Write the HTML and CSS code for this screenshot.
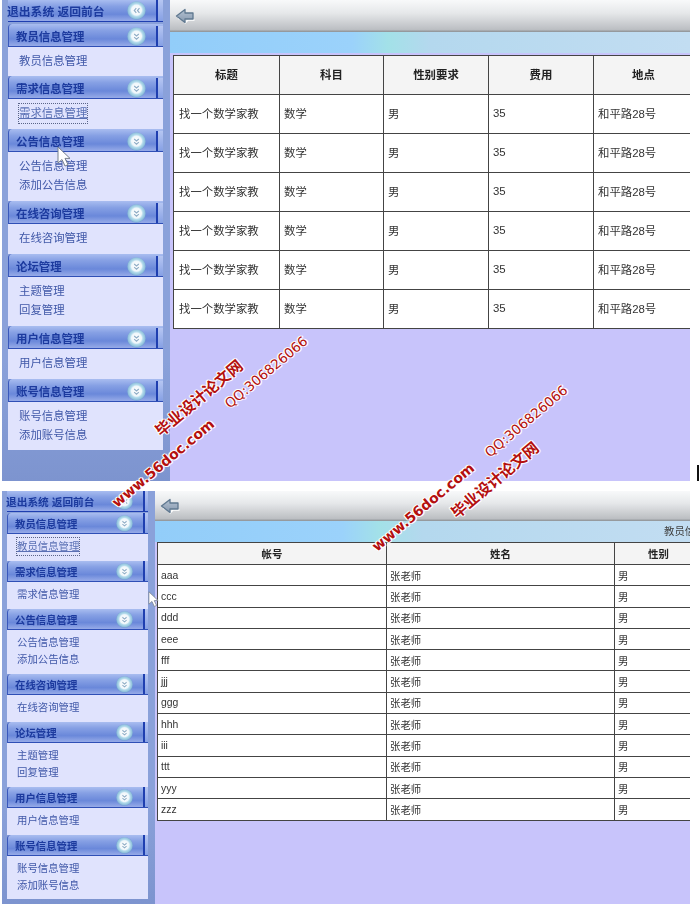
FILE: index.html
```html
<!DOCTYPE html>
<html lang="zh-CN">
<head>
<meta charset="utf-8">
<title>后台管理</title>
<link rel="stylesheet" href="styles.css">
</head>
<body>
<svg class="defs" width="0" height="0" aria-hidden="true">
  <defs>
    <radialGradient id="orb" cx="50%" cy="48%" r="52%">
      <stop offset="0" stop-color="#ffffff"/>
      <stop offset=".52" stop-color="#f0f7fb"/>
      <stop offset=".66" stop-color="#b4dcec"/>
      <stop offset=".88" stop-color="#8fc0dc"/>
      <stop offset="1" stop-color="#6e9ad0"/>
    </radialGradient>
    <linearGradient id="arrowFill" x1="0" y1="0" x2="0" y2="1">
      <stop offset="0" stop-color="#b4c2d2"/>
      <stop offset="1" stop-color="#8698ae"/>
    </linearGradient>
    <symbol id="i-down" viewBox="0 0 18 18">
      <circle cx="9" cy="9" r="8.800" fill="url(#orb)"/>
      <path d="M6.800 6.600 9 8.500l2.200-1.900M6.800 9.600 9 11.500l2.200-1.900" fill="none" stroke="#8fadc6" stroke-width="1.100"/>
    </symbol>
    <symbol id="i-left" viewBox="0 0 18 18">
      <circle cx="9" cy="9" r="8.800" fill="url(#orb)"/>
      <path d="M8.800 6.800 6.900 9l1.900 2.200M11.800 6.800 9.900 9l1.900 2.200" fill="none" stroke="#8fadc6" stroke-width="1.100"/>
    </symbol>
    <symbol id="i-back" viewBox="0 0 20 16">
      <path d="M3 10.500h7.500v4L13 12h6.500M11 15.500" fill="none" stroke="#fff" stroke-width="1.500"/>
      <path d="M1.500 8 10 1.500V5h8v6h-8v3.500Z" fill="url(#arrowFill)" stroke="#5f7890" stroke-width="1.300" stroke-linejoin="round"/>
    </symbol>
    <symbol id="i-cursor" viewBox="0 0 14 22">
      <path d="M1 1v16l4-3.500 3 6.500 3-1.300-3-6.300h5Z" fill="#fff" stroke="#77808c" stroke-width="1"/>
    </symbol>
  </defs>
</svg>

<div class="page">
  <section class="shot shot--a">
    <nav class="sidebar">
      <div class="topbar-nav"><span>退出系统 返回前台</span><svg class="orb"><use href="#i-left"/></svg><i class="tab"></i></div>
      <div class="group"><h3 class="group-head"><span>教员信息管理</span><svg class="orb"><use href="#i-down"/></svg><i class="tab"></i></h3><div class="group-body group-body--first"><a class="link" href="#">教员信息管理</a></div></div>
      <div class="group"><h3 class="group-head"><span>需求信息管理</span><svg class="orb"><use href="#i-down"/></svg><i class="tab"></i></h3><div class="group-body"><a class="link link--focus" href="#">需求信息管理</a></div></div>
      <div class="group"><h3 class="group-head"><span>公告信息管理</span><svg class="orb"><use href="#i-down"/></svg><i class="tab"></i></h3><div class="group-body"><a class="link" href="#">公告信息管理</a><a class="link" href="#">添加公告信息</a></div></div>
      <div class="group"><h3 class="group-head"><span>在线咨询管理</span><svg class="orb"><use href="#i-down"/></svg><i class="tab"></i></h3><div class="group-body"><a class="link" href="#">在线咨询管理</a></div></div>
      <div class="group"><h3 class="group-head"><span>论坛管理</span><svg class="orb"><use href="#i-down"/></svg><i class="tab"></i></h3><div class="group-body"><a class="link" href="#">主题管理</a><a class="link" href="#">回复管理</a></div></div>
      <div class="group"><h3 class="group-head"><span>用户信息管理</span><svg class="orb"><use href="#i-down"/></svg><i class="tab"></i></h3><div class="group-body"><a class="link" href="#">用户信息管理</a></div></div>
      <div class="group"><h3 class="group-head"><span>账号信息管理</span><svg class="orb"><use href="#i-down"/></svg><i class="tab"></i></h3><div class="group-body"><a class="link" href="#">账号信息管理</a><a class="link" href="#">添加账号信息</a></div></div>
    </nav>
    <main class="main">
      <div class="toolbar"><svg class="back"><use href="#i-back"/></svg></div>
      <div class="strip"></div>
      <table class="grid">
        <thead><tr><th class="c1">标题</th><th class="c2">科目</th><th class="c3">性别要求</th><th class="c4">费用</th><th class="c5">地点</th></tr></thead>
        <tbody>
          <tr><td>找一个数学家教</td><td>数学</td><td>男</td><td>35</td><td>和平路28号</td></tr>
          <tr><td>找一个数学家教</td><td>数学</td><td>男</td><td>35</td><td>和平路28号</td></tr>
          <tr><td>找一个数学家教</td><td>数学</td><td>男</td><td>35</td><td>和平路28号</td></tr>
          <tr><td>找一个数学家教</td><td>数学</td><td>男</td><td>35</td><td>和平路28号</td></tr>
          <tr><td>找一个数学家教</td><td>数学</td><td>男</td><td>35</td><td>和平路28号</td></tr>
          <tr><td>找一个数学家教</td><td>数学</td><td>男</td><td>35</td><td>和平路28号</td></tr>
        </tbody>
      </table>
    </main>
  </section>

  <section class="shot shot--b">
    <nav class="sidebar">
      <div class="topbar-nav"><span>退出系统 返回前台</span><svg class="orb"><use href="#i-left"/></svg><i class="tab"></i></div>
      <div class="group"><h3 class="group-head"><span>教员信息管理</span><svg class="orb"><use href="#i-down"/></svg><i class="tab"></i></h3><div class="group-body"><a class="link link--focus" href="#">教员信息管理</a></div></div>
      <div class="group"><h3 class="group-head"><span>需求信息管理</span><svg class="orb"><use href="#i-down"/></svg><i class="tab"></i></h3><div class="group-body"><a class="link" href="#">需求信息管理</a></div></div>
      <div class="group"><h3 class="group-head"><span>公告信息管理</span><svg class="orb"><use href="#i-down"/></svg><i class="tab"></i></h3><div class="group-body"><a class="link" href="#">公告信息管理</a><a class="link" href="#">添加公告信息</a></div></div>
      <div class="group"><h3 class="group-head"><span>在线咨询管理</span><svg class="orb"><use href="#i-down"/></svg><i class="tab"></i></h3><div class="group-body"><a class="link" href="#">在线咨询管理</a></div></div>
      <div class="group"><h3 class="group-head"><span>论坛管理</span><svg class="orb"><use href="#i-down"/></svg><i class="tab"></i></h3><div class="group-body"><a class="link" href="#">主题管理</a><a class="link" href="#">回复管理</a></div></div>
      <div class="group"><h3 class="group-head"><span>用户信息管理</span><svg class="orb"><use href="#i-down"/></svg><i class="tab"></i></h3><div class="group-body"><a class="link" href="#">用户信息管理</a></div></div>
      <div class="group"><h3 class="group-head"><span>账号信息管理</span><svg class="orb"><use href="#i-down"/></svg><i class="tab"></i></h3><div class="group-body"><a class="link" href="#">账号信息管理</a><a class="link" href="#">添加账号信息</a></div></div>
    </nav>
    <main class="main">
      <div class="toolbar"><svg class="back"><use href="#i-back"/></svg></div>
      <div class="strip"><span class="strip-label">教员信息管理</span></div>
      <table class="grid">
        <thead><tr><th class="c1">帐号</th><th class="c2">姓名</th><th class="c3">性别</th></tr></thead>
        <tbody>
          <tr><td>aaa</td><td>张老师</td><td>男</td></tr>
          <tr><td>ccc</td><td>张老师</td><td>男</td></tr>
          <tr><td>ddd</td><td>张老师</td><td>男</td></tr>
          <tr><td>eee</td><td>张老师</td><td>男</td></tr>
          <tr><td>fff</td><td>张老师</td><td>男</td></tr>
          <tr><td>jjj</td><td>张老师</td><td>男</td></tr>
          <tr><td>ggg</td><td>张老师</td><td>男</td></tr>
          <tr><td>hhh</td><td>张老师</td><td>男</td></tr>
          <tr><td>iii</td><td>张老师</td><td>男</td></tr>
          <tr><td>ttt</td><td>张老师</td><td>男</td></tr>
          <tr><td>yyy</td><td>张老师</td><td>男</td></tr>
          <tr><td>zzz</td><td>张老师</td><td>男</td></tr>
        </tbody>
      </table>
    </main>
  </section>

  <svg class="cursor cursor--a"><use href="#i-cursor"/></svg>
  <svg class="cursor cursor--b"><use href="#i-cursor"/></svg>
  <i class="stray"></i>

  <span class="mark mark--cn mark-a1">毕业设计论文网</span>
  <span class="mark mark--url mark-a2">www.56doc.com</span>
  <span class="mark mark--qq mark-a3">QQ:306826066</span>
  <span class="mark mark--url mark-b1">www.56doc.com</span>
  <span class="mark mark--cn mark-b2">毕业设计论文网</span>
  <span class="mark mark--qq mark-b3">QQ:306826066</span>
</div>
</body>
</html>
```
FILE: styles.css
```css
* { box-sizing: border-box; }

html, body {
  margin: 0;
  background: #fff;
  overflow: hidden;
}

.defs { position: absolute; }

.page {
  position: relative;
  width: 699px;
  height: 904px;
  font-family: "Liberation Sans", "Noto Sans CJK SC", sans-serif;
  color: #333;
}

.shot {
  display: flex;
  width: 690px;
  overflow: hidden;
  filter: blur(0.5px);
}

.shot--a {
  height: 481px;
  margin-bottom: 10px;
  --side: 168px;
  --pad-l: 6px;
  --pad-r: 7px;
  --nav-h: 22px;
  --head-h: 23px;
  --head-top: 2px;
  --nav-font: 11.8px;
  --head-font: 11.4px;
  --link-font: 11.4px;
  --link-lh: 19px;
  --body-one: 30px;
  --body-two: 49px;
  --body-last: 48px;
  --body-top: 5px;
  --link-left: 11px;
  --head-left: 7px;
  --tab: 7px;
  --orb: 19px;
  --orb-gap: 10px;
}

.shot--b {
  height: 413px;
  --side: 153px;
  --pad-l: 5px;
  --pad-r: 7px;
  --nav-h: 21px;
  --head-h: 21px;
  --head-top: 0px;
  --nav-font: 10.700px;
  --head-font: 10.400px;
  --link-font: 10.400px;
  --link-lh: 17px;
  --body-one: 27px;
  --body-two: 44px;
  --body-last: 43px;
  --body-top: 4px;
  --link-left: 10px;
  --head-left: 7px;
  --tab: 5px;
  --orb: 17px;
  --orb-gap: 10px;
}

/* Sidebar */
.sidebar {
  flex: none;
  width: var(--side);
  margin-left: 2px;
  padding: 0 var(--pad-r) 0 var(--pad-l);
  background: linear-gradient(180deg, #8aa1da 0, #8aa1da 75%, #7d94cf 100%);
}

.topbar-nav,
.group-head {
  display: flex;
  align-items: center;
  margin: 0;
  background: linear-gradient(180deg, #a9bdf0 0, #86a0e4 30%, #6a88da 68%, #97abe8 100%);
  color: #1c3a9e;
  white-space: nowrap;
}

.topbar-nav {
  height: var(--nav-h);
  font-size: var(--nav-font);
  font-weight: 700;
  border-bottom: 1px solid #1f3fb0;
  margin-bottom: 2px;
}

.shot--b .topbar-nav { margin-bottom: 1px; }

.topbar-nav span { margin-left: -1px; }

.topbar-nav span,
.group-head span {
  flex: 1;
  min-width: 0;
}

.group-head {
  height: var(--head-h);
  padding: var(--head-top) 0 0 var(--head-left);
  font-size: var(--head-font);
  font-weight: 700;
  border-left: 1px solid #3a58bc;
  border-bottom: 1px solid #2f4fb6;
  border-radius: 4px 0 0 0;
}

.orb {
  flex: none;
  width: var(--orb);
  height: var(--orb);
  margin-right: var(--orb-gap);
}

.tab {
  flex: none;
  align-self: stretch;
  width: var(--tab);
  border-left: 2px solid #1f3fb0;
  background: linear-gradient(180deg, #b6c6f2 0, #86a0e4 100%);
}

.group-body {
  height: var(--body-one);
  padding: var(--body-top) 0 0 var(--link-left);
  background: #e0e3fd;
}

.group-body:has(.link + .link) { height: var(--body-two); }
.group-body--first { height: calc(var(--body-one) - 1px); }
.group:last-child .group-body { height: var(--body-last); }

.link {
  display: block;
  width: max-content;
  font-size: var(--link-font);
  line-height: var(--link-lh);
  color: #4058a8;
  text-decoration: none;
}

.link--focus {
  outline: 1px dotted #5a6488;
  text-decoration: underline;
  color: #5a70b4;
}

/* Main */
.main {
  flex: 1;
  min-width: 0;
  overflow: hidden;
  background: #c8c4fb;
}

.toolbar {
  display: flex;
  align-items: center;
  height: 32px;
  padding-left: 5px;
  background: linear-gradient(180deg, #f8f9fa 0, #e6e8ea 40%, #bcbfc3 92%, #8c9094 100%);
}

.back {
  width: 20px;
  height: 16px;
}

.strip {
  height: 21px;
  margin-bottom: 2px;
  background: linear-gradient(90deg, #92cdf9 0, #9bd2fb 35%, #a3e1e8 42%, #b4d8ee 50%, #c2ddf2 100%);
  white-space: nowrap;
}

.shot--b .toolbar { height: 30px; }
.shot--b .strip { margin-bottom: 0; padding-left: 509px; }

.strip-label {
  font-size: 10.400px;
  line-height: 18px;
  color: #444;
}

.grid {
  border-collapse: collapse;
  table-layout: fixed;
  margin-left: 3px;
  background: #fff;
}

.shot--a .grid { width: 520px; }
.shot--b .grid { width: 545px; margin-left: 2px; }

.grid th,
.grid td {
  border: 1px solid #444;
  padding: 0 0 2px 4px;
  overflow: hidden;
  white-space: nowrap;
}

.grid td:first-child { padding-left: 5px; }

.grid th {
  padding: 0 0 2px;
  background: #f4f4f4;
  color: #222;
  font-weight: 700;
  text-align: center;
}

.shot--a .grid th { height: 39px; font-size: 11.400px; }
.shot--a .grid td { height: 39px; font-size: 11.400px; }
.shot--a .c1 { width: 106px; }
.shot--a .c2 { width: 104px; }
.shot--a .c3 { width: 105px; }
.shot--a .c4 { width: 105px; }
.shot--a .c5 { width: 100px; }

.shot--b .grid th { height: 22px; padding-bottom: 0; font-size: 10.400px; }
.shot--b .grid td { height: 21.300px; padding: 0 0 0 3px; font-size: 10.400px; }
.shot--b .c1 { width: 229px; }
.shot--b .c2 { width: 228px; }
.shot--b .c3 { width: 88px; }

/* Overlays */
.cursor {
  position: absolute;
  width: 14px;
  height: 22px;
}
.cursor--a { left: 57px; top: 146px; }
.cursor--b { left: 148px; top: 591px; width: 11px; height: 17px; }

.stray {
  position: absolute;
  left: 697px;
  top: 465px;
  width: 2px;
  height: 16px;
  background: #111;
}

.mark {
  position: absolute;
  transform: translate(-50%, -50%) rotate(-40deg);
  color: #b4100f;
  white-space: nowrap;
  text-shadow: 1px 0 0 #fff, -1px 0 0 #fff, 0 1px 0 #fff, 0 -1px 0 #fff, 1px 1px 1px #fff, -1px -1px 1px #fff;
}
.mark--cn { font-size: 15.500px; font-weight: 700; font-family: "Noto Sans CJK SC", sans-serif; }
.mark--url { font-size: 14px; font-weight: 700; font-family: "DejaVu Sans", sans-serif; }
.mark--qq { font-size: 13.500px; font-family: "DejaVu Sans", sans-serif; }

.mark-a1 { left: 198px; top: 397px; }
.mark-a2 { left: 163px; top: 463px; }
.mark-a3 { left: 266px; top: 372px; }
.mark-b1 { left: 423px; top: 507px; }
.mark-b2 { left: 494px; top: 479px; }
.mark-b3 { left: 526px; top: 421px; }
```
